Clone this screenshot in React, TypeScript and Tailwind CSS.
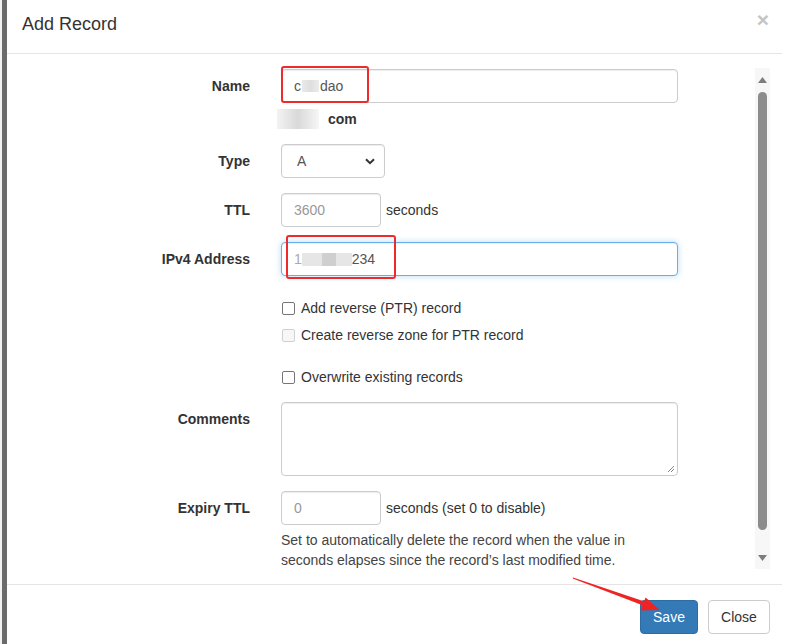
import React from "react";

const inputCls =
    "h-[34px] rounded-[4px] border border-[#ccc] bg-white px-[12px] leading-[20px] text-[#555] shadow-[inset_0_1px_1px_rgba(0,0,0,0.075)] flex items-center";

function Row({ label, children, className = "" }: { label: string; children: React.ReactNode; className?: string }) {
    return (
        <div className={"flex " + className}>
            <div className="w-[243px] shrink-0 pt-[7px] text-right font-bold leading-[20px] text-[#333]">{label}</div>
            <div className="ml-[31px]">{children}</div>
        </div>
    );
}

function Check({ label, disabled = false, className = "" }: { label: string; disabled?: boolean; className?: string }) {
    return (
        <div className={"ml-[274px] flex items-center leading-[20px] " + className}>
            {disabled ? (
                <span className="ml-[1px] h-[13px] w-[13px] rounded-[2px] border border-[#d0d0d0] bg-[#f7f7f7]" />
            ) : (
                <span className="ml-[1px] h-[13px] w-[13px] rounded-[2px] border border-[#767676] bg-white" />
            )}
            <span className="ml-[6px] text-[#333]">{label}</span>
        </div>
    );
}

export default function App() {
    return (
        <div className="relative flex h-[644px] w-[786px] overflow-hidden bg-white text-[14px] font-['Liberation_Sans',Arial,sans-serif] text-[#333]">
            {/* backdrop edge */}
            <div className="w-[2px] bg-[#f2f2f2]" />
            <div className="w-[5px] bg-[#6b6b6b]" />

            {/* Modal */}
            <div className="flex w-[775px] flex-col bg-white">
                {/* Header */}
                <div className="flex h-[54px] shrink-0 justify-between border-b border-[#e5e5e5] pl-[15px] pr-[13px]">
                    <h4 className="pt-[14px] text-[18px] leading-[20px] text-[#333]">Add Record</h4>
                    <span className="pt-[9px] text-[21px] font-bold leading-[21px] text-[#c4c4c4]">×</span>
                </div>

                {/* Body */}
                <div className="flex h-[530px] shrink-0">
                    <div className="flex-1 pt-[15px]">
                        <Row label="Name">
                            <div className="relative">
                                <div className={inputCls + " w-[397px]"}>
                                    <span>c</span>
                                    <span className="mx-[1px] h-[12px] w-[17px] bg-gradient-to-r from-[#eaeaea] via-[#dedede] to-[#ececec]" />
                                    <span>dao</span>
                                </div>
                                <div className="absolute left-0 top-[-3px] h-[37px] w-[88px] rounded-[3px] border-2 border-[#ee2b2b]" />
                            </div>
                            <div className="mt-[6px] ml-[-4px] flex items-center font-bold leading-[20px]">
                                <span className="h-[20px] w-[42px] bg-gradient-to-r from-[#f3f3f3] via-[#d9d9d9] to-[#f6f6f6]" />
                                <span className="ml-[9px]">com</span>
                            </div>
                        </Row>

                        <Row label="Type" className="mt-[15px]">
                            <div className={inputCls + " w-[104px] justify-between pl-[15px] pr-[9px] text-[#555]"}>
                                <span>A</span>
                                <svg width="10" height="7" viewBox="0 0 10 7">
                                    <path d="M1 1.2 L5 5.2 L9 1.2" fill="none" stroke="#333" strokeWidth="2" />
                                </svg>
                            </div>
                        </Row>

                        <Row label="TTL" className="mt-[15px]">
                            <div className="flex items-center">
                                <div className={inputCls + " w-[100px] text-[#999]"}>3600</div>
                                <span className="ml-[5px]">seconds</span>
                            </div>
                        </Row>

                        <Row label="IPv4 Address" className="mt-[15px]">
                            <div className="relative">
                                <div className="flex h-[34px] w-[397px] items-center rounded-[4px] border border-[#66afe9] bg-white px-[12px] text-[#555] shadow-[inset_0_1px_1px_rgba(0,0,0,0.075),0_0_6px_rgba(102,175,233,0.45)]">
                                    <span className="text-[#aaa]">1</span>
                                    <span className="flex h-[13px] w-[50px] items-center bg-[#e6e6e6]">
                                        <span className="ml-[20px] h-[13px] w-[14px] bg-[#cfcfcf]" />
                                    </span>
                                    <span>234</span>
                                </div>
                                <div className="absolute left-[5px] top-[-7px] h-[44px] w-[110px] rounded-[3px] border-2 border-[#ee2b2b]" />
                            </div>
                        </Row>

                        <Check label="Add reverse (PTR) record" className="mt-[22px]" />
                        <Check label="Create reverse zone for PTR record" disabled className="mt-[7px]" />
                        <Check label="Overwrite existing records" className="mt-[22px]" />

                        <Row label="Comments" className="mt-[15px]">
                            <div className="relative h-[74px] w-[397px] rounded-[4px] border border-[#ccc] shadow-[inset_0_1px_1px_rgba(0,0,0,0.075)]">
                                <svg className="absolute bottom-[2px] right-[2px]" width="8" height="8" viewBox="0 0 8 8">
                                    <path d="M7 1 L1 7 M7 4 L4 7" stroke="#888" strokeWidth="1" />
                                </svg>
                            </div>
                        </Row>

                        <Row label="Expiry TTL" className="mt-[15px]">
                            <div className="flex items-center">
                                <div className={inputCls + " w-[100px] text-[#999]"}>0</div>
                                <span className="ml-[5px]">seconds (set 0 to disable)</span>
                            </div>
                            <p className="mt-[5px] leading-[20px] text-[#444]">
                                Set to automatically delete the record when the value in
                                <br />
                                seconds elapses since the record’s last modified time.
                            </p>
                        </Row>
                    </div>

                    {/* Scrollbar */}
                    <div className="mb-[15px] mr-[12px] mt-[14px] flex w-[15px] flex-col items-center bg-[#f7f7f7]">
                        <svg className="mt-[9px]" width="9" height="6" viewBox="0 0 9 6">
                            <path d="M4.5 0 L9 6 L0 6 Z" fill="#7d7d7d" />
                        </svg>
                        <div className="mt-[9px] h-[438px] w-[9px] rounded-full bg-[#8c8c8c]" />
                        <div className="flex-1" />
                        <svg className="mb-[8px]" width="9" height="6" viewBox="0 0 9 6">
                            <path d="M0 0 L9 0 L4.5 6 Z" fill="#7d7d7d" />
                        </svg>
                    </div>
                </div>

                {/* Footer */}
                <div className="flex flex-1 justify-end gap-[10px] border-t border-[#e5e5e5] pr-[12px] pt-[15px]">
                    <button className="h-[34px] w-[58px] rounded-[4px] border border-[#2e6da4] bg-[#337ab7] leading-[20px] text-white">
                        Save
                    </button>
                    <button className="h-[34px] w-[62px] rounded-[4px] border border-[#ccc] bg-white leading-[20px] text-[#333]">
                        Close
                    </button>
                </div>
            </div>

            {/* Annotation arrow */}
            <svg className="pointer-events-none absolute inset-0" width="786" height="644" viewBox="0 0 786 644">
                <polygon points="573,577.6 644.5,601.6 643.2,605.4 572.8,578.4" fill="#ee2424" />
                <polygon points="660,610 645.6,597.6 640.6,610.6" fill="#ee2424" />
            </svg>
        </div>
    );
}
